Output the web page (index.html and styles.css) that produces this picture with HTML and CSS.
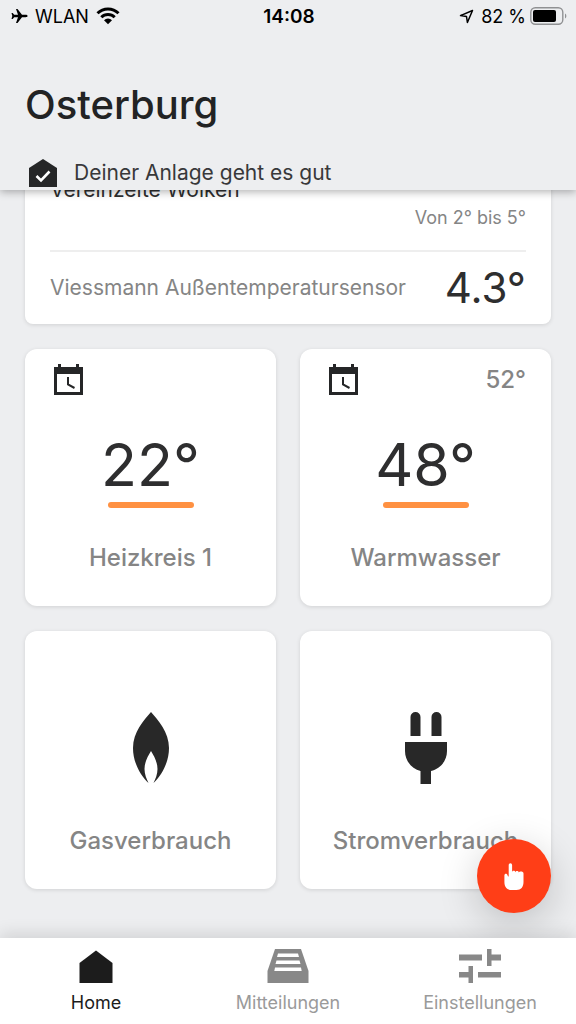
FILE: index.html
```html
<!DOCTYPE html>
<html lang="de">
<head>
<meta charset="utf-8">
<meta name="viewport" content="width=device-width, initial-scale=1">
<title>Osterburg</title>
<link rel="stylesheet" href="styles.css">
</head>
<body>
<div class="app">
  <header class="header">
    <div class="status">
      <div class="status-group">
        <svg width="17" height="16" viewBox="0 0 17 16" aria-hidden="true"><path d="M16.600 8c0-.8-1-1.200-2-1.200h-3.600L6.500 1H5l2 5.800H3.200L1.700 5H.5l.8 3-.8 3h1.200l1.500-1.800H7L5 15h1.500L11 9.200h3.600c1 0 2-.4 2-1.200z"/></svg>
        <span>WLAN</span>
        <svg width="24" height="18" viewBox="0 0 24 18" aria-hidden="true"><path d="M1.500 6.300a15 15 0 0 1 21 0M5.300 10.300a9.600 9.600 0 0 1 13.400 0" fill="none" stroke="#000" stroke-width="3"/><path d="M12 17.200l-4-4a5.800 5.800 0 0 1 8 0z"/></svg>
      </div>
      <time class="clock">14:08</time>
      <div class="status-group status-end">
        <svg width="15" height="15" viewBox="0 0 15 15" aria-hidden="true"><path d="M13.500 1.500L1.500 6.600l6 .9.900 6z" fill="none" stroke="#000" stroke-width="1.500" stroke-linejoin="round"/></svg>
        <span>82 %</span>
        <svg class="battery" width="37" height="18" viewBox="0 0 37 18" aria-hidden="true"><rect x=".8" y=".8" width="32" height="16.400" rx="4.500" fill="none" stroke="#909193" stroke-width="1.400"/><rect x="3" y="3" width="23" height="12" rx="2"/><path d="M35 6.500c1.800.8 1.800 4.200 0 5z" fill="#909193"/></svg>
      </div>
    </div>
    <h1 class="title">Osterburg</h1>
    <div class="health">
      <svg width="28" height="28" viewBox="0 0 28 28" aria-hidden="true"><path d="M14 0l14 9v19H0V9z" fill="#252627"/><path d="M7.500 17l4.500 4.500 8.500-9" fill="none" stroke="#fff" stroke-width="2.600"/></svg>
      <span>Deiner Anlage geht es gut</span>
    </div>
  </header>

  <div class="stage">
    <main class="content">
      <section class="card weather">
        <p class="weather-text">Vereinzelte Wolken</p>
        <p class="weather-range">Von 2° bis 5°</p>
        <div class="sensor">
          <span class="sensor-name">Viessmann Außentemperatursensor</span>
          <span class="sensor-value">4.3°</span>
        </div>
      </section>
      <div class="tiles">
        <section class="card tile">
          <div class="tile-top">
            <svg width="29" height="31" viewBox="0 0 29 31" aria-hidden="true"><path d="M0 3h4V0h3v3h15V0h3v3h4v28H0zM3 10v18h23V10z" fill="#252627" fill-rule="evenodd"/><path d="M14 13v7.500l6.500 3.500" fill="none" stroke="#252627" stroke-width="2"/></svg>
          </div>
          <div class="value">22°</div>
          <div class="bar"></div>
          <h2 class="label">Heizkreis 1</h2>
        </section>
        <section class="card tile">
          <div class="tile-top">
            <svg width="29" height="31" viewBox="0 0 29 31" aria-hidden="true"><path d="M0 3h4V0h3v3h15V0h3v3h4v28H0zM3 10v18h23V10z" fill="#252627" fill-rule="evenodd"/><path d="M14 13v7.500l6.500 3.500" fill="none" stroke="#252627" stroke-width="2"/></svg>
            <span class="target">52°</span>
          </div>
          <div class="value">48°</div>
          <div class="bar"></div>
          <h2 class="label">Warmwasser</h2>
        </section>
        <section class="card tile usage">
          <svg width="36" height="72" viewBox="0 0 36 72" aria-hidden="true"><path d="M18 0C25 8 36 20 36 36c0 14-7 27-15.500 35 2-4 4-9 4-14 0-7-3.500-13-6.500-18-3 5-6.500 11-6.500 18 0 5 2 10 4 14C7 63 0 50 0 36 0 20 11 8 18 0z" fill="#282828"/></svg>
          <h2 class="label">Gasverbrauch</h2>
        </section>
        <section class="card tile usage">
          <svg width="42" height="72" viewBox="0 0 42 72" aria-hidden="true"><path d="M5.500 24V5a5 5 0 0 1 10 0v19zM26.500 24V5a5 5 0 0 1 10 0v19zM0 30h42v9c0 10-7 18-16 20v13H15.500V59C7 57 0 49 0 39z" fill="#282828"/></svg>
          <h2 class="label">Stromverbrauch</h2>
        </section>
      </div>
    </main>
    <button class="fab" type="button" aria-label="Aktion">
      <svg width="20" height="27" viewBox="0 0 20 27" aria-hidden="true"><path d="M4.700 13V2a1.700 1.700 0 0 1 3.400 0v7c.3-1.600 3-1.600 3.300.2.400-1.600 3.100-1.500 3.400.3.500-1.500 4.700-1.500 4.700 1V19c0 5-2.500 8-7 8H8C3 27 .4 24 .4 19v-6.500c0-2.200 2.800-2.200 3.200 0 .2 1 1.100 1.500 1.100.5z" fill="#fff"/></svg>
    </button>
  </div>

  <nav class="tabs">
    <a class="tab tab-active" href="#home">
      <svg width="42" height="36" viewBox="0 0 42 36" aria-hidden="true"><path d="M21 2.500l16.500 12.500v20h-33V15z" fill="#1c1c1c"/></svg>
      <span>Home</span>
    </a>
    <a class="tab" href="#mitteilungen">
      <svg width="42" height="36" viewBox="0 0 42 36" aria-hidden="true"><path d="M8 1h26l7.500 22v12H.5V23z" fill="#888"/><path d="M11 5.500h20l1 3.500H10zM9.500 12.500h23l1 3.500h-25zM8 19.500h26l.7 3.500H7.300z" fill="#fff"/></svg>
      <span>Mitteilungen</span>
    </a>
    <a class="tab" href="#einstellungen">
      <svg width="42" height="36" viewBox="0 0 42 36" aria-hidden="true"><path d="M0 6.500h23v6H0zM28 1h4.500v5.500H42v6h-9.500V18H28zM0 24h9.500v-6H14v17H9.500v-5.500H0zM19 24h23v5.500H19z" fill="#888"/></svg>
      <span>Einstellungen</span>
    </a>
  </nav>
</div>
</body>
</html>
```
FILE: styles.css
```css
* {
  box-sizing: border-box;
}

body {
  margin: 0;
  background: #edeef0;
  color: #2e2e2f;
  font-family: Inter, "Liberation Sans", sans-serif;
}

h1,
h2,
p {
  margin: 0;
}

svg {
  display: block;
  flex: none;
}

.app {
  display: flex;
  flex-direction: column;
  height: 100vh;
}

.header {
  position: relative;
  z-index: 1;
  padding-bottom: 3px;
  background: #edeef0;
  box-shadow: 0 2px 8px rgba(0, 0, 0, 0.3);
}

.status {
  display: grid;
  grid-template-columns: 1fr auto 1fr;
  align-items: center;
  height: 32px;
  padding: 0 9px 0 11px;
  color: #000;
  font-size: 18px;
}

.status-group {
  display: flex;
  align-items: center;
  gap: 7px;
}

.status-end {
  justify-content: flex-end;
}

.battery {
  margin-left: -3px;
}

.clock {
  font-size: 19px;
  font-weight: 600;
}

.title {
  padding: 48px 25px 0;
  color: #222324;
  font-size: 40px;
  font-weight: 500;
  line-height: 50px;
}

.health {
  display: flex;
  align-items: center;
  gap: 17px;
  padding: 28px 29px 0;
  color: #38383a;
  font-size: 21px;
  line-height: 29px;
}

.stage {
  position: relative;
  flex: 1;
  min-height: 0;
}

.content {
  height: 100%;
  padding: 0 25px;
  overflow: hidden;
}

.card {
  border-radius: 12px;
  background: #fff;
  box-shadow: 0 1px 4px rgba(0, 0, 0, 0.12);
}

.weather {
  margin-top: -24px;
  padding: 11px 25px 0;
  border-radius: 8px;
}

.weather-text {
  font-size: 21px;
  line-height: 26px;
}

.weather-range {
  padding: 4px 0 21px;
  color: #858585;
  font-size: 18px;
  line-height: 22px;
  text-align: right;
}

.sensor {
  display: flex;
  align-items: center;
  justify-content: space-between;
  height: 74px;
  padding-bottom: 2px;
  border-top: 2px solid #eee;
}

.sensor-name {
  color: #858585;
  font-size: 21px;
}

.sensor-value {
  font-size: 42px;
}

.tiles {
  display: grid;
  grid-template-columns: 1fr 1fr;
  gap: 25px 24px;
  padding-top: 25px;
}

.tile {
  display: flex;
  flex-direction: column;
  align-items: center;
  padding: 15px 25px 33px;
}

.tile-top {
  display: flex;
  align-items: center;
  justify-content: space-between;
  align-self: stretch;
  height: 31px;
  padding-left: 4px;
}

.target {
  color: #858585;
  font-size: 24px;
  font-weight: 500;
}

.value {
  margin-top: 34px;
  font-size: 59px;
  line-height: 72px;
}

.bar {
  width: 86px;
  height: 6px;
  margin-top: 1px;
  border-radius: 3px;
  background: #ff9142;
}

.label {
  margin-top: 35px;
  color: #858585;
  font-size: 24px;
  font-weight: 500;
  line-height: 30px;
}

.usage {
  padding-top: 81px;
}

.usage .label {
  margin-top: 42px;
}

.fab {
  position: absolute;
  right: 25px;
  bottom: 25px;
  display: flex;
  align-items: center;
  justify-content: center;
  width: 74px;
  height: 74px;
  padding: 0;
  border: 0;
  border-radius: 50%;
  background: #ff3e17;
  box-shadow: 0 10px 40px rgba(0, 0, 0, 0.2);
}

.tabs {
  position: relative;
  display: grid;
  grid-template-columns: repeat(3, 1fr);
  padding: 10px 0;
  background: #fff;
  box-shadow: 0 -4px 16px rgba(0, 0, 0, 0.12);
}

.tab {
  display: flex;
  flex-direction: column;
  align-items: center;
  gap: 8px;
  color: #9a9a9a;
  font-size: 18px;
  line-height: 22px;
  text-decoration: none;
}

.tab-active {
  color: #1c1c1c;
}
```
